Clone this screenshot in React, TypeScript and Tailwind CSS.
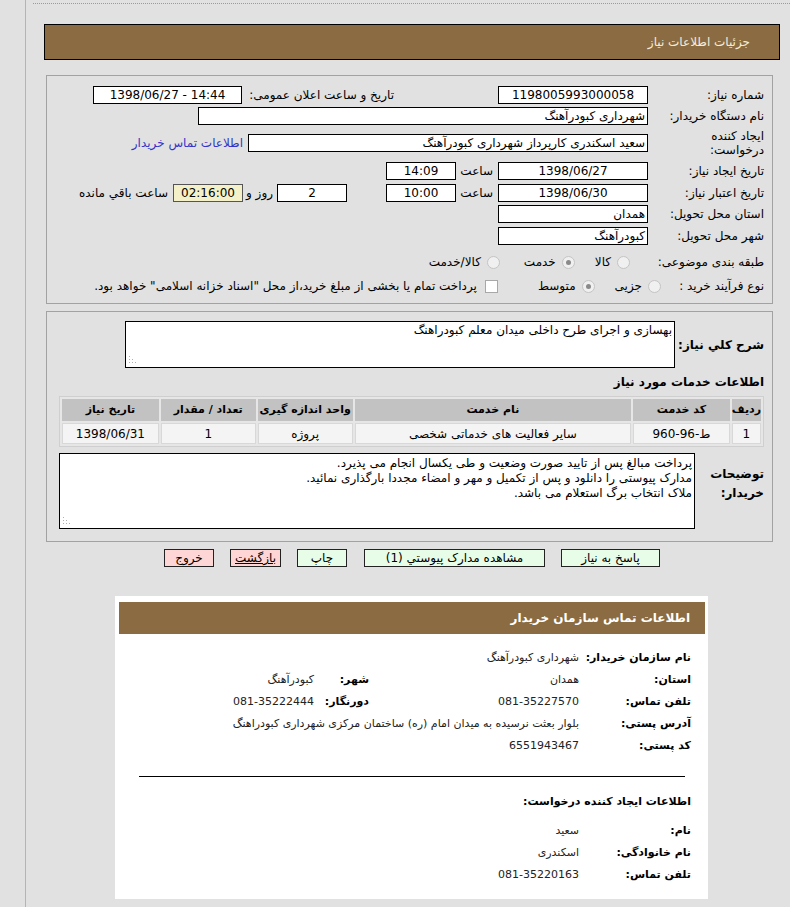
import React from "react";

const box = "h-[18px] border border-black bg-white flex items-center text-[12px] leading-none";

function Radio({ checked }: { checked?: boolean }) {
  return (
    <span className="w-[13px] h-[13px] rounded-full border border-[#c4c4c4] bg-[#f0f0f0] flex items-center justify-center">
      {checked && <span className="w-[5px] h-[5px] rounded-full bg-[#8a8a8a]" />}
    </span>
  );
}

function Grip() {
  return (
    <svg className="absolute left-[3px] bottom-[3px]" width="8" height="8" viewBox="0 0 8 8">
      <rect x="0" y="6" width="1" height="1" fill="#b0b0b0" />
      <rect x="0" y="3" width="1" height="1" fill="#b0b0b0" />
      <rect x="0" y="0" width="1" height="1" fill="#b0b0b0" />
      <rect x="3" y="6" width="1" height="1" fill="#b0b0b0" />
      <rect x="3" y="3" width="1" height="1" fill="#b0b0b0" />
      <rect x="6" y="6" width="1" height="1" fill="#b0b0b0" />
    </svg>
  );
}

function Label({ children, className = "" }: { children: React.ReactNode; className?: string }) {
  return <div className={"w-[116px] shrink-0 text-right " + className}>{children}</div>;
}

function Btn({ children, pink, className = "" }: { children: React.ReactNode; pink?: boolean; className?: string }) {
  return (
    <button
      className={
        "h-[18px] border border-[#222] text-[12px] leading-none text-black flex items-center justify-center " +
        (pink ? "bg-[#ffd6d6] " : "bg-[#e8fde8] ") +
        className
      }
    >
      {children}
    </button>
  );
}

export default function App() {
  const cols = [
    { t: "ردیف", w: "w-[28px]" },
    { t: "کد خدمت", w: "w-[97px]" },
    { t: "نام خدمت", w: "w-[278px]" },
    { t: "واحد اندازه گیری", w: "w-[95px]" },
    { t: "تعداد / مقدار", w: "w-[95px]" },
    { t: "تاریخ نیاز", w: "w-[97px]" },
  ];
  const row = ["1", "ط-96-960", "سایر فعالیت های خدماتی شخصی", "پروژه", "1", "1398/06/31"];
  const lbl = "font-bold text-[11px] whitespace-nowrap";
  const val = "text-[#222] whitespace-nowrap";

  return (
    <div className="min-h-[907px] bg-[#e1e1e1] pl-[25px] font-['DejaVu_Sans',sans-serif] text-black">
      <div className="min-h-[907px] border-l border-[#b4b4b4] pt-[3px] pb-[10px]">
        <div className="ml-[7px] border-t border-dotted border-[#9a9a9a]" />

        {/* page title */}
        <div
          dir="rtl"
          className="mt-[20px] ml-[18px] mr-[10px] h-[36px] border border-black bg-[#8b6c42] flex items-center pr-[29px] text-[12px] text-[#f3ecdc]"
        >
          جزئیات اطلاعات نیاز
        </div>

        {/* main info panel */}
        <div dir="rtl" className="mt-[15px] ml-[20px] mr-[17px] border border-[#a2a2a2] pt-[8px] pb-[8px] pr-[8px] text-[12px]">
          <div className="flex items-center h-[21px]">
            <Label>شماره نیاز:</Label>
            <div className={box + " w-[150px] justify-center"}>1198005993000058</div>
            <div className="w-[146px] mr-[104px] text-right">تاریخ و ساعت اعلان عمومی:</div>
            <div dir="ltr" className={box + " w-[149px] mr-[6px] justify-center"}>1398/06/27 - 14:44</div>
          </div>
          <div className="flex items-center h-[22px]">
            <Label>نام دستگاه خریدار:</Label>
            <div className={box + " w-[450px] pr-[2px]"}>شهرداری کبودرآهنگ</div>
          </div>
          <div className="flex items-center h-[32px]">
            <Label className="leading-[14px]">
              ایجاد کننده
              <br />
              درخواست:
            </Label>
            <div className={box + " w-[400px] pr-[2px]"}>سعید اسکندری کارپرداز شهرداری کبودرآهنگ</div>
            <a className="mr-[5px] text-[#3434c8]">اطلاعات تماس خریدار</a>
          </div>
          <div className="flex items-center h-[23px]">
            <Label>تاریخ ایجاد نیاز:</Label>
            <div className={box + " w-[150px] justify-center"}>1398/06/27</div>
            <div className="w-[42px] pr-[5px] text-right">ساعت</div>
            <div className={box + " w-[70px] justify-center"}>14:09</div>
          </div>
          <div className="flex items-center h-[21px]">
            <Label>تاریخ اعتبار نیاز:</Label>
            <div className={box + " w-[150px] justify-center"}>1398/06/30</div>
            <div className="w-[42px] pr-[5px] text-right">ساعت</div>
            <div className={box + " w-[70px] justify-center"}>10:00</div>
            <div className={box + " w-[70px] mr-[39px] justify-center"}>2</div>
            <div className="w-[34px] pr-[4px] text-right">روز و</div>
            <div className="h-[18px] w-[70px] border border-[#555] bg-[#f4f0c8] flex items-center justify-center leading-none">
              02:16:00
            </div>
            <div className="mr-[5px]">ساعت باقي مانده</div>
          </div>
          <div className="flex items-center h-[22px]">
            <Label>استان محل تحویل:</Label>
            <div className={box + " w-[150px] pr-[2px]"}>همدان</div>
          </div>
          <div className="flex items-center h-[22px]">
            <Label>شهر محل تحویل:</Label>
            <div className={box + " w-[150px] pr-[2px]"}>کبودرآهنگ</div>
          </div>
          <div className="flex items-center h-[30px]">
            <Label>طبقه بندی موضوعی:</Label>
            <div className="flex items-center gap-[6px] mr-[18px]">
              <Radio />
              <span>کالا</span>
            </div>
            <div className="flex items-center gap-[6px] mr-[20px]">
              <Radio checked />
              <span>خدمت</span>
            </div>
            <div className="flex items-center gap-[6px] mr-[24px]">
              <Radio />
              <span>کالا/خدمت</span>
            </div>
          </div>
          <div className="flex items-center h-[18px]">
            <Label>نوع فرآیند خرید :</Label>
            <div className="flex items-center gap-[6px] mr-[-13px]">
              <Radio />
              <span>جزیی</span>
            </div>
            <div className="flex items-center gap-[6px] mr-[20px]">
              <Radio checked />
              <span>متوسط</span>
            </div>
            <div className="flex items-center gap-[8px] mr-[40px]">
              <span className="w-[13px] h-[13px] border border-[#a8a8a8] bg-white" />
              <span>پرداخت تمام یا بخشی از مبلغ خرید،از محل "اسناد خزانه اسلامی" خواهد بود.</span>
            </div>
          </div>
        </div>

        {/* description panel */}
        <div dir="rtl" className="mt-[7px] ml-[20px] mr-[17px] border border-[#a2a2a2] pt-[9px] pb-[12px] pr-[8px] text-[12px]">
          <div className="flex items-center">
            <div className="w-[89px] shrink-0 text-right font-bold text-[12px] whitespace-nowrap">شرح کلي نیاز:</div>
            <div className="relative w-[550px] h-[47px] border border-black bg-white pr-[2px] pt-[1px] leading-[15px]">
              بهسازی و اجرای طرح داخلی میدان معلم کبودراهنگ
              <Grip />
            </div>
          </div>
          <div className="mt-[6px] h-[16px] font-bold text-[12px] leading-[16px]">اطلاعات خدمات مورد نیاز</div>
          <table className="mt-[6px] w-[705px] border-separate border-spacing-[2px] border border-[#cfcfcf] bg-[#e6e6e6]">
            <thead>
              <tr>
                {cols.map((c) => (
                  <th key={c.t} className={c.w + " h-[22px] bg-[#c2c2c2] font-bold text-[11px] text-center whitespace-nowrap"}>
                    {c.t}
                  </th>
                ))}
              </tr>
            </thead>
            <tbody>
              <tr>
                {row.map((v, i) => (
                  <td key={i} className="h-[21px] bg-[#f4f4f4] border border-[#d8d8d8] text-center text-[12px]">
                    {v}
                  </td>
                ))}
              </tr>
            </tbody>
          </table>
          <div className="mt-[6px] flex items-center">
            <div className="w-[69px] shrink-0 text-right font-bold text-[12px] leading-[19px] mt-[-14px]">
              توضیحات
              <br />
              خریدار:
            </div>
            <div className="relative w-[636px] h-[76px] border border-black bg-white pr-[2px] pt-[2px] leading-[15px]">
              <div>پرداخت مبالغ پس از تایید صورت وضعیت و طی یکسال انجام می پذیرد.</div>
              <div>مدارک پیوستی را دانلود و پس از تکمیل و مهر و امضاء مجددا بارگذاری نمائید.</div>
              <div>ملاک انتخاب برگ استعلام می باشد.</div>
              <Grip />
            </div>
          </div>
        </div>

        {/* action buttons */}
        <div dir="rtl" className="mt-[7px] pr-[130px] flex items-center gap-[16px]">
          <Btn className="w-[99px]">پاسخ به نیاز</Btn>
          <Btn className="w-[181px] ml-[1px]">مشاهده مدارک پیوستي (1)</Btn>
          <Btn className="w-[50px]">چاپ</Btn>
          <Btn pink className="w-[51px]">
            <span className="underline">بازگشت</span>
          </Btn>
          <Btn pink className="w-[50px]">خروج</Btn>
        </div>

        {/* buyer contact card */}
        <div dir="rtl" className="mt-[29px] ml-[89px] w-[593px] bg-white pt-[6px] pb-[13px] text-[11px]">
          <div className="mr-[3px] ml-[4px] h-[32px] bg-[#8b6c42] flex items-center pr-[15px] text-white font-bold text-[12px]">
            اطلاعات تماس سازمان خریدار
          </div>
          <table className="mt-[13px] mr-[17px] border-collapse">
            <tbody>
              <tr className="h-[22px]">
                <td className={lbl + " w-[108px]"}>نام سازمان خریدار:</td>
                <td className={val + " pr-[4px]"} colSpan={3}>شهرداری کبودرآهنگ</td>
              </tr>
              <tr className="h-[22px]">
                <td className={lbl}>استان:</td>
                <td className={val + " w-[214px] pr-[4px]"}>همدان</td>
                <td className={lbl + " w-[55px]"}>شهر:</td>
                <td className={val}>کبودرآهنگ</td>
              </tr>
              <tr className="h-[22px]">
                <td className={lbl}>تلفن تماس:</td>
                <td className={val + " pr-[4px]"}>081-35227570</td>
                <td className={lbl}>دورنگار:</td>
                <td className={val}>081-35222444</td>
              </tr>
              <tr className="h-[22px]">
                <td className={lbl}>آدرس پستی:</td>
                <td className={val + " pr-[4px]"} colSpan={3}>
                  بلوار بعثت نرسیده به میدان امام (ره) ساختمان مرکزی شهرداری کبودراهنگ
                </td>
              </tr>
              <tr className="h-[22px]">
                <td className={lbl}>کد پستی:</td>
                <td className={val + " pr-[4px]"} colSpan={3}>6551943467</td>
              </tr>
            </tbody>
          </table>
          <div className="mt-[19px] mr-[23px] ml-[24px] border-t border-black" />
          <div className="mt-[17px] mr-[17px] h-[16px] font-bold text-[11px] leading-[16px]">اطلاعات ایجاد کننده درخواست:</div>
          <table className="mt-[10px] mr-[17px] border-collapse">
            <tbody>
              <tr className="h-[22px]">
                <td className={lbl + " w-[108px]"}>نام:</td>
                <td className={val + " pr-[4px]"}>سعید</td>
              </tr>
              <tr className="h-[22px]">
                <td className={lbl}>نام خانوادگی:</td>
                <td className={val + " pr-[4px]"}>اسکندری</td>
              </tr>
              <tr className="h-[22px]">
                <td className={lbl}>تلفن تماس:</td>
                <td className={val + " pr-[4px]"}>081-35220163</td>
              </tr>
            </tbody>
          </table>
        </div>
      </div>
    </div>
  );
}
